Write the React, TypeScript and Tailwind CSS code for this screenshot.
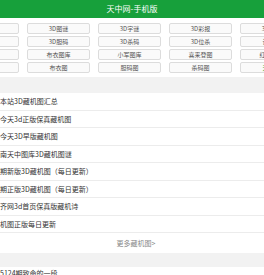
import React from 'react';

const buttons: { label: string; green?: boolean }[] = [
  { label: '3D预测' }, { label: '3D图谜' }, { label: '3D字谜' }, { label: '3D彩报' }, { label: '3D图库' },
  { label: '3D金码' }, { label: '3D胆码' }, { label: '3D杀码' }, { label: '3D位杀' }, { label: '试机号' },
  { label: '图库大全' }, { label: '布衣图库' }, { label: '小军图库' }, { label: '喜来登图' }, { label: '红五图库' },
  { label: '藏机图' }, { label: '布衣图' }, { label: '胆码图' }, { label: '杀码图' }, { label: '天中图', green: true },
];

const rows = [
  '本站3D藏机图汇总',
  '今天3d正版保真藏机图',
  '今天3D早版藏机图',
  '南天中图库3D藏机图谜',
  '期新版3D藏机图（每日更新）',
  '期正版3D藏机图（每日更新）',
  '齐网3d首页保真版藏机诗',
  '机图正版每日更新',
];

export default function App() {
  return (
    <div
      className="w-[264px] h-[275px] overflow-hidden bg-white"
      style={{ fontFamily: '"Noto Sans CJK SC", "Noto Sans", sans-serif' }}
    >
      <div className="h-[18px] bg-[#17a03b] flex items-center justify-center text-white text-[8px]">
        天中网-手机版
      </div>

      <div className="ml-[-44px] w-[347px] mt-[5px] grid grid-cols-5 gap-x-[8px] gap-y-[2px]">
        {buttons.map((b, i) => (
          <div
            key={i}
            className={`h-[11px] border border-[#dcdcdc] rounded-[2px] bg-[#fafafa] flex items-center justify-center text-[6px] leading-none ${
              b.green ? 'text-[#17a03b]' : 'text-[#555]'
            }`}
          >
            {b.label}
          </div>
        ))}
      </div>

      <div className="mt-[4px] h-[16px] bg-[#f2f2f2]" />

      <div>
        {rows.map((r, i) => (
          <div
            key={i}
            className="h-[17.5px] border-b border-[#ececec] flex items-center text-[7px] text-[#333] whitespace-nowrap"
          >
            {r}
          </div>
        ))}
        <div className="h-[19.5px] flex items-center justify-center text-[7px] text-[#888] pl-[8px]">
          更多藏机图&gt;
        </div>
      </div>

      <div className="h-[14px] bg-[#f2f2f2]" />

      <div className="h-[14px] flex items-center text-[7px] text-[#333] whitespace-nowrap">
        5124期致命的一段
      </div>
    </div>
  );
}
